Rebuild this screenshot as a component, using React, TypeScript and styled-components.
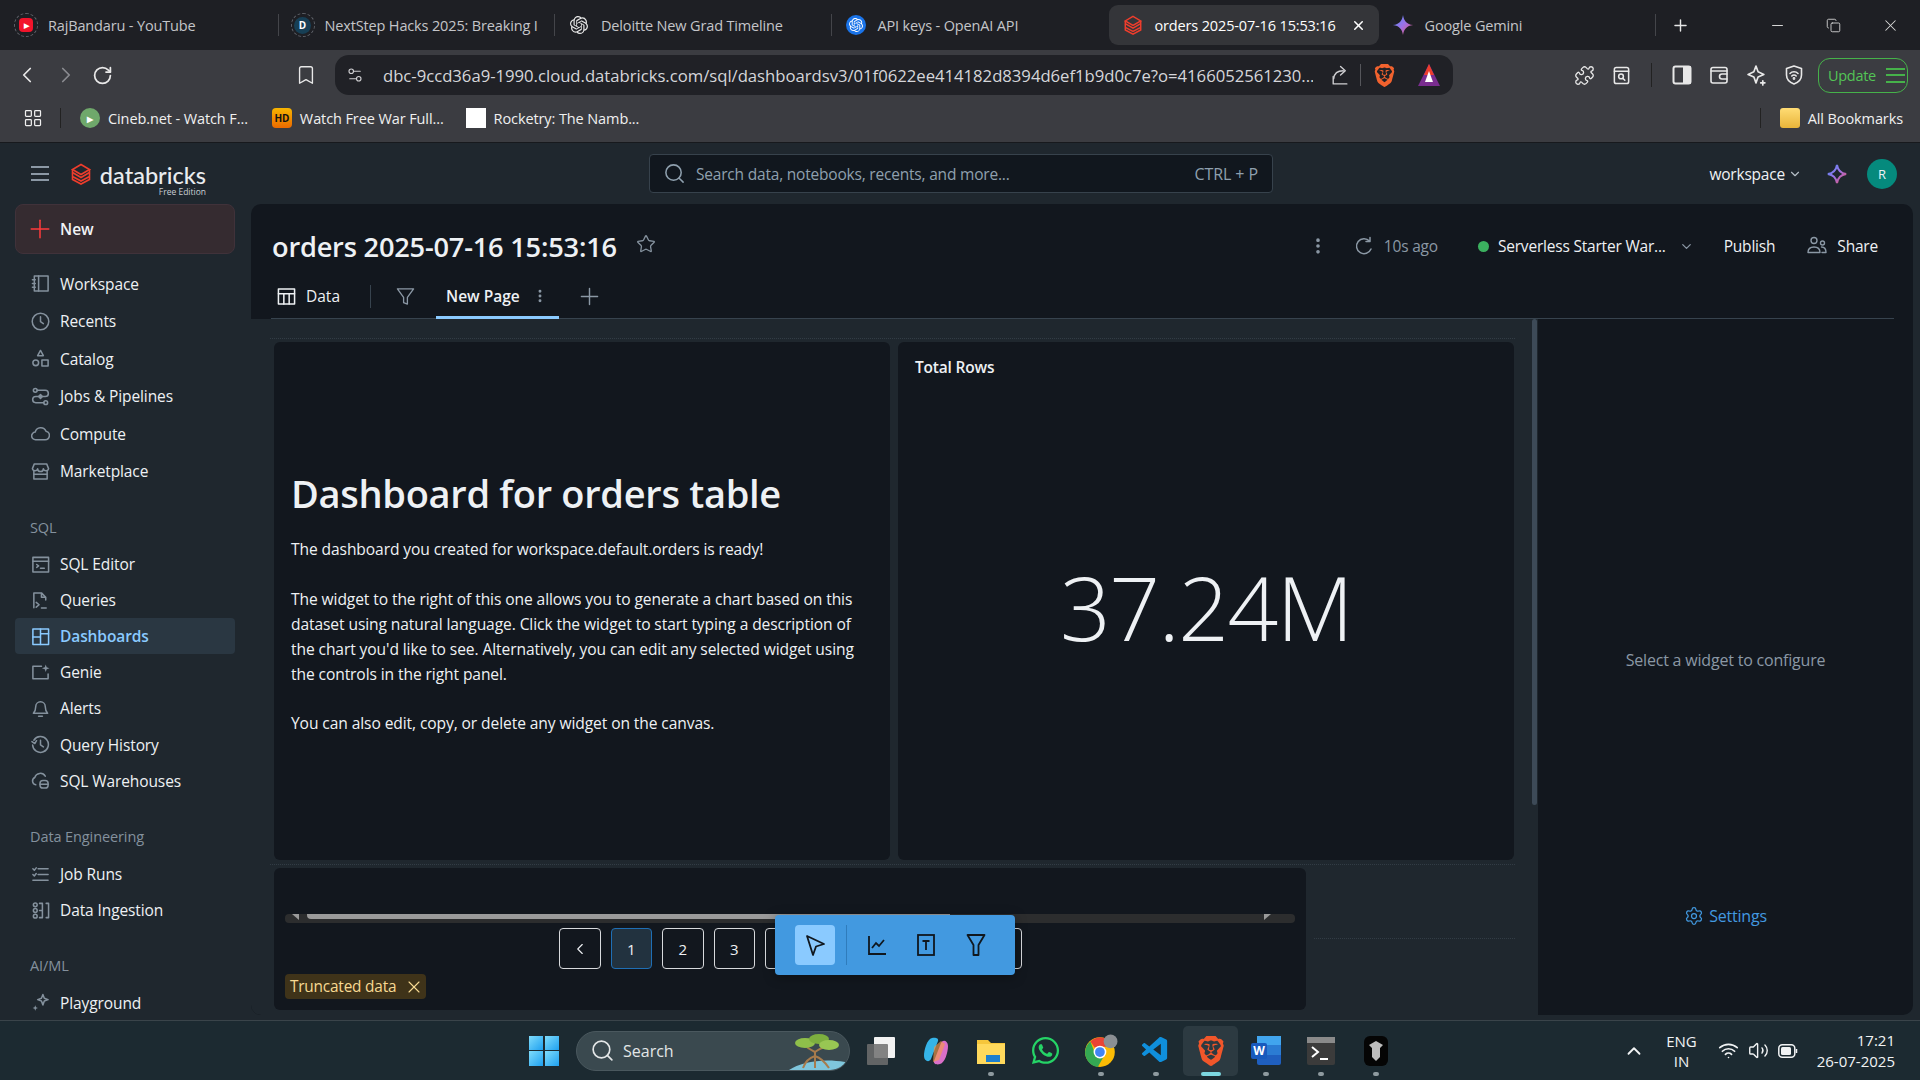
import React from 'react';
import styled, { createGlobalStyle } from 'styled-components';
import {
  Bookmark, ChevronDown, ChevronLeft, ChevronRight, ChevronUp, Copy,
  EllipsisVertical, LayoutGrid, Minus, Plus, Puzzle, RotateCw, Search, Settings,
  Settings2, Star, Volume2, Wifi, X,
} from 'lucide-react';
import { FaWhatsapp } from 'react-icons/fa';
import { SiBrave, SiOpenai } from 'react-icons/si';
import { VscVscode } from 'react-icons/vsc';

const FONT = '"Open Sans", "Noto Sans", sans-serif';

const Global = createGlobalStyle`
  html, body { margin: 0; padding: 0; background: #1f272e; }
  * { box-sizing: border-box; }
  body { font-family: ${FONT}; overflow: hidden; }
`;

const Screen = styled.div`
  width: 1920px;
  height: 1080px;
  display: flex;
  flex-direction: column;
  overflow: hidden;
`;

/* browser chrome */
const TabStrip = styled.div`
  height: 50px;
  background: #1e1f24;
  display: flex;
  align-items: center;
  padding-left: 2px;
  flex: none;
`;

const Tab = styled.div<{ $w?: number; $active?: boolean }>`
  width: ${(p) => p.$w ?? 276.5}px;
  height: 40px;
  display: flex;
  align-items: center;
  gap: 10px;
  padding-left: 12px;
  border-radius: 9px;
  color: ${(p) => (p.$active ? '#fff' : '#c4c5c9')};
  font-size: 14.5px;
  letter-spacing: -0.15px;
  background: ${(p) => (p.$active ? '#343539' : 'transparent')};
  white-space: nowrap;
  overflow: hidden;
  position: relative;
  flex: none;
`;

const TabIcon = styled.span`
  width: 24px;
  height: 24px;
  flex: none;
  display: flex;
  align-items: center;
  justify-content: center;
  color: #e6e6e6;
`;

const TabClose = styled.span`
  margin-left: auto;
  margin-right: 13px;
  display: flex;
`;

const TabDivider = styled.div`
  width: 1px;
  height: 22px;
  background: #44454a;
  margin-left: -1px;
  flex: none;
`;

const NewTab = styled.div`
  margin-left: 15px;
  color: #e6e6e6;
  display: flex;
`;

const WindowControls = styled.div`
  margin-left: auto;
  display: flex;
  align-items: center;
  gap: 40px;
  padding-right: 20px;
  color: #d9d9d9;
`;

const Toolbar = styled.div`
  height: 50px;
  background: #3b3c41;
  display: flex;
  align-items: center;
  padding: 0 12px 0 16px;
  flex: none;
  color: #e8e8e8;
`;

const NavButtons = styled.div`
  display: flex;
  align-items: center;
  gap: 13px;
  width: 279px;
`;

const UrlBar = styled.div`
  width: 1118px;
  height: 40px;
  margin-left: 18px;
  background: #202126;
  border-radius: 14px;
  display: flex;
  align-items: center;
  padding: 0 12px 0 11px;
  color: #cfcfd2;
`;

const UrlText = styled.span`
  margin-left: 19px;
  width: 931px;
  font-size: 16.7px;
  letter-spacing: -0.02px;
  white-space: nowrap;
  overflow: hidden;
  color: #d5d6da;
`;

const VSep = styled.span<{ $h?: number; $c?: string; $mx?: number }>`
  width: 1px;
  height: ${(p) => p.$h ?? 22}px;
  background: ${(p) => p.$c ?? '#55565b'};
  margin: 0 ${(p) => p.$mx ?? 10}px;
  flex: none;
`;

const ExtIcons = styled.div`
  display: flex;
  align-items: center;
  gap: 17px;
  margin-left: 121px;
`;

const UpdateBtn = styled.div`
  width: 90px;
  height: 35px;
  margin-left: 14px;
  border: 1.5px solid #46b24a;
  border-radius: 12px;
  color: #53c556;
  font-size: 14.5px;
  display: flex;
  align-items: center;
  justify-content: space-between;
  padding: 0 2px 0 9px;
  letter-spacing: -0.3px;
`;

const Burger = styled.span<{ $c?: string; $w?: number }>`
  width: ${(p) => p.$w ?? 20}px;
  height: 15px;
  display: block;
  border-top: 2px solid ${(p) => p.$c ?? '#46b24a'};
  border-bottom: 2px solid ${(p) => p.$c ?? '#46b24a'};
  position: relative;
  flex: none;
  &::after {
    content: '';
    position: absolute;
    left: 0;
    right: 0;
    top: 4.5px;
    height: 2px;
    background: ${(p) => p.$c ?? '#46b24a'};
  }
`;

const Bookmarks = styled.div`
  height: 43px;
  background: #3b3c41;
  display: flex;
  align-items: center;
  padding: 0 17px 6px 23px;
  color: #f0f0f0;
  font-size: 14.5px;
  letter-spacing: -0.1px;
  flex: none;
  border-bottom: 1px solid #17191d;
`;

const BookmarkItem = styled.div<{ $ml?: number }>`
  display: flex;
  align-items: center;
  gap: 8px;
  margin-left: ${(p) => p.$ml ?? 0}px;
  white-space: nowrap;
`;

const Favicon = styled.span<{ $bg: string; $r?: number; $c?: string }>`
  width: 20px;
  height: 20px;
  border-radius: ${(p) => p.$r ?? 10}px;
  background: ${(p) => p.$bg};
  color: ${(p) => p.$c ?? '#fff'};
  display: inline-flex;
  align-items: center;
  justify-content: center;
  font-size: 10px;
  font-weight: 700;
  flex: none;
`;

/* databricks shell */
const AppShell = styled.div`
  flex: 1;
  min-height: 0;
  display: flex;
  flex-direction: column;
  background: #1f272e;
`;

const TopBar = styled.div`
  height: 61px;
  flex: none;
  display: flex;
  align-items: center;
  padding-left: 31px;
`;

const LogoBlock = styled.div`
  margin: 9px 0 0 21px;
  display: flex;
  align-items: flex-start;
  gap: 7px;
  width: 138px;
  flex: none;
  svg { margin-top: 2px; flex: none; }
`;

const LogoWords = styled.div`
  display: flex;
  flex-direction: column;
  align-items: flex-end;
  width: 107px;
  flex: none;
`;

const LogoName = styled.span`
  font-family: Lato, sans-serif;
  font-size: 23.5px;
  line-height: 28px;
  font-weight: 500;
  color: #e9ecef;
  letter-spacing: 0;
`;

const LogoSub = styled.span`
  font-size: 8.5px;
  line-height: 6px;
  color: #c9ced4;
`;

const SearchBox = styled.div`
  width: 624px;
  height: 39px;
  margin-left: 441px;
  background: #11171e;
  border: 1px solid #37424c;
  border-radius: 4px;
  display: flex;
  align-items: center;
  padding: 0 14px 0 13px;
  color: #8fa0ae;
  font-size: 15.5px;
  flex: none;
`;

const SearchHint = styled.span`
  margin-left: 10px;
  letter-spacing: -0.2px;
`;

const Shortcut = styled.span`
  margin-left: auto;
  font-size: 16px;
  letter-spacing: -0.1px;
`;

const UserArea = styled.div`
  margin-left: auto;
  padding-right: 23px;
  display: flex;
  align-items: center;
  color: #eef1f4;
  font-size: 15.5px;
  letter-spacing: -0.2px;
`;

const Avatar = styled.span`
  width: 30px;
  height: 30px;
  border-radius: 50%;
  background: #058a7d;
  display: flex;
  align-items: center;
  justify-content: center;
  font-size: 13px;
  margin-left: 20px;
`;

const Body = styled.div`
  flex: 1;
  min-height: 0;
  display: flex;
`;

const Sidebar = styled.nav`
  width: 251px;
  flex: none;
  overflow: hidden;
  padding: 0 16px 0 15px;
`;

const NewButton = styled.div`
  height: 50px;
  border-radius: 8px;
  background: #352b30;
  border: 1px solid #40323a;
  display: flex;
  align-items: center;
  gap: 5px;
  padding-left: 9px;
  font-size: 15.5px;
  font-weight: 600;
  color: #f1f3f5;
  margin-bottom: 11px;
`;

const NavRow = styled.div<{ $h: number; $active?: boolean }>`
  height: ${(p) => p.$h}px;
  border-radius: 4px;
  display: flex;
  align-items: center;
  gap: 10px;
  padding-left: 16px;
  font-size: 15.5px;
  letter-spacing: -0.1px;
  color: ${(p) => (p.$active ? '#8acaff' : '#eef1f4')};
  font-weight: ${(p) => (p.$active ? 600 : 400)};
  background: ${(p) => (p.$active ? '#2a3742' : 'transparent')};
  svg { color: ${(p) => (p.$active ? '#8acaff' : '#84919d')}; flex: none; }
`;

const NavLabel = styled.div<{ $mb?: number; $mt?: number }>`
  height: 20px;
  line-height: 20px;
  margin: ${(p) => p.$mt ?? 27.5}px 0 ${(p) => p.$mb ?? 9}px 15px;
  font-size: 14.5px;
  letter-spacing: -0.1px;
  color: #84919d;
`;

const Main = styled.main`
  flex: 1;
  min-width: 0;
  margin: 0 7px 5px 0;
  background: #12171e;
  border-radius: 10px;
  display: flex;
  flex-direction: column;
  overflow: hidden;
`;

const TitleRow = styled.div`
  height: 76px;
  flex: none;
  display: flex;
  align-items: center;
  padding: 8px 35px 0 21px;
  color: #eef1f4;
`;

const Title = styled.h1`
  margin: 0 19px 0 0;
  font-size: 27.2px;
  font-weight: 600;
  letter-spacing: -0.2px;
  color: #eef1f4;
`;

const Meta = styled.span<{ $muted?: boolean; $ml?: number }>`
  font-size: 15.5px;
  letter-spacing: -0.2px;
  margin-left: ${(p) => p.$ml ?? 0}px;
  color: ${(p) => (p.$muted ? '#8b98a5' : '#eef1f4')};
  white-space: nowrap;
`;

const StatusDot = styled.span`
  width: 11px;
  height: 11px;
  border-radius: 50%;
  background: #3bb05f;
  margin-left: 40px;
  margin-right: 9px;
  flex: none;
`;

const TabsRow = styled.div`
  height: 39px;
  flex: none;
  margin: 0 19px 0 20px;
  border-bottom: 1px solid #37434e;
  display: flex;
  align-items: center;
  color: #eef1f4;
  font-size: 15.5px;
  padding: 0 0 6px 6px;
`;

const DataTab = styled.div`
  display: flex;
  align-items: center;
  gap: 10px;
  color: #eef1f4;
`;

const PageTab = styled.div`
  width: 123px;
  height: 39px;
  align-self: flex-end;
  margin: 0 0 -7px 21px;
  border-bottom: 3px solid #8acaff;
  padding: 0 0 4px 10px;
  display: flex;
  align-items: center;
  gap: 12px;
  font-weight: 600;
  flex: none;
`;

const Workspace = styled.div`
  flex: 1;
  min-height: 0;
  display: flex;
`;

const Canvas = styled.div`
  width: 1287px;
  flex: none;
  background: #1f272e;
  padding: 19px 0 0 23px;
  position: relative;
`;

const CardRow = styled.div<{ $h: number }>`
  height: ${(p) => p.$h}px;
  display: flex;
  gap: 8px;
  margin-left: -4px;
  padding: 3px 0 0 4px;
  width: 1245px;
  border-top: 1px dotted #323c45;
  margin-bottom: 4px;
`;

const Card = styled.section<{ $w: number }>`
  width: ${(p) => p.$w}px;
  background: #12171e;
  border-radius: 6px;
  position: relative;
  flex: none;
`;

const EmptyCell = styled.div`
  flex: 1;
  height: 71px;
  border-bottom: 1px dotted #323c45;
`;

const TextCard = styled(Card)`
  display: flex;
  flex-direction: column;
  justify-content: center;
  padding: 0 18px 0 17px;
  color: #eef1f4;
  font-size: 15.6px;
  line-height: 25px;
  letter-spacing: -0.1px;
`;

const CardHeading = styled.h2`
  margin: 0 0 17.5px;
  font-size: 38px;
  line-height: 54px;
  font-weight: 600;
  letter-spacing: -0.3px;
`;

const CardPara = styled.p`
  margin: 0 0 24.5px;
  &:last-child { margin-bottom: 0; }
`;

const CounterCard = styled(Card)`
  display: flex;
  flex-direction: column;
  padding: 15px 17px;
  color: #eef1f4;
`;

const CounterTitle = styled.div`
  font-size: 15.5px;
  line-height: 20px;
  font-weight: 600;
  letter-spacing: -0.2px;
`;

const CounterValue = styled.div`
  flex: 1;
  display: flex;
  align-items: center;
  justify-content: center;
  padding-bottom: 10px;
  font-weight: 300;
  font-size: 89px;
  letter-spacing: -1.5px;
`;

const TableCard = styled(Card)`
  padding-top: 46px;
`;

const ScrollTrack = styled.div`
  height: 9px;
  margin: 0 11px;
  background: #2c2d2e;
  border-radius: 4px;
  display: flex;
  align-items: flex-start;
  justify-content: space-between;
  padding: 0 24px 0 7px;
`;

const ScrollThumb = styled.div`
  width: 643px;
  height: 5px;
  margin: 0 auto 0 8px;
  background: #9a9a9a;
  border-radius: 0 0 0 4px;
`;

const ScrollArrow = styled.span<{ $flip?: boolean }>`
  width: 0;
  height: 0;
  border-top: 6px solid #9a9a9a;
  ${(p) => (p.$flip ? 'border-right: 7px solid transparent;' : 'border-left: 7px solid transparent;')}
`;

const Pager = styled.div`
  display: flex;
  gap: 10px;
  margin: 5px 0 0 285px;
`;

const PageButton = styled.div<{ $active?: boolean; $w?: number }>`
  width: ${(p) => p.$w ?? 41.5}px;
  height: 41px;
  border-radius: 4px;
  border: 1px solid ${(p) => (p.$active ? '#1f6fb5' : '#d8dadd')};
  background: ${(p) => (p.$active ? '#22323f' : 'transparent')};
  color: #eef1f4;
  font-size: 15px;
  display: flex;
  align-items: center;
  justify-content: center;
`;

const TruncatedTag = styled.div`
  position: absolute;
  left: 11px;
  bottom: 11px;
  width: 141px;
  height: 25px;
  border-radius: 4px;
  background: #3f3319;
  color: #f7d992;
  font-size: 15.4px;
  letter-spacing: -0.2px;
  display: flex;
  align-items: center;
  justify-content: space-between;
  padding: 0 2px 0 5px;
`;

const FloatBar = styled.div`
  position: absolute;
  left: 501px;
  top: 47px;
  width: 240px;
  height: 60px;
  background: #4299e0;
  border-radius: 4px;
  box-shadow: 0 2px 12px rgba(0, 0, 0, 0.35);
  display: flex;
  align-items: center;
  padding-left: 20px;
  color: #10171e;
`;

const FloatTool = styled.span<{ $active?: boolean; $w?: number }>`
  width: ${(p) => p.$w ?? 40}px;
  height: 40px;
  border-radius: 4px;
  background: ${(p) => (p.$active ? '#8acaff' : 'transparent')};
  display: flex;
  align-items: center;
  justify-content: center;
`;

const Rail = styled.div`
  width: 5px;
  flex: none;
  background: #1f272e;
  margin-left: -6px;
  position: relative;
  &::after {
    content: '';
    position: absolute;
    left: 0;
    top: 0;
    width: 5px;
    height: 486px;
    background: #3d4a57;
    border-radius: 3px;
  }
`;

const ConfigPanel = styled.aside`
  flex: 1;
  margin-left: 1px;
  display: flex;
  flex-direction: column;
  align-items: center;
  color: #8b98a5;
  font-size: 16px;
  letter-spacing: -0.2px;
  padding-top: 330px;
`;

const SettingsLink = styled.div`
  margin-top: 234px;
  display: flex;
  align-items: center;
  gap: 5px;
  color: #4299e0;
`;

/* windows taskbar */
const Taskbar = styled.div`
  height: 60px;
  flex: none;
  background: #1c2a31;
  border-top: 1px solid #3a444a;
  display: flex;
  align-items: center;
  padding-left: 529px;
  color: #f1f3f4;
`;

const StartGrid = styled.div`
  width: 30px;
  height: 30px;
  display: grid;
  grid-template-columns: 1fr 1fr;
  gap: 1.5px;
  span { background: linear-gradient(135deg, #7fdcfb, #1ea0f0); }
`;

const SearchPill = styled.div`
  width: 274px;
  height: 40px;
  margin-left: 17px;
  border-radius: 20px;
  background: #3a494f;
  border: 1px solid #4a585e;
  display: flex;
  align-items: center;
  padding-left: 13px;
  gap: 8px;
  font-size: 16px;
  color: #e3e6e7;
  overflow: hidden;
`;

const PillArt = styled.svg`
  margin-left: auto;
  margin-right: 4px;
`;

const TaskIcons = styled.div`
  display: flex;
  margin-left: 3px;
`;

const TaskSlot = styled.div<{ $active?: boolean; $dot?: boolean }>`
  width: 55px;
  height: 50px;
  border-radius: 5px;
  display: flex;
  align-items: center;
  justify-content: center;
  position: relative;
  background: ${(p) => (p.$active ? '#2c3a41' : 'transparent')};
  &::after {
    content: '';
    display: ${(p) => (p.$dot || p.$active ? 'block' : 'none')};
    position: absolute;
    bottom: 0;
    left: 50%;
    transform: translateX(-50%);
    width: ${(p) => (p.$active ? 20 : 6)}px;
    height: 4px;
    border-radius: 3px;
    background: ${(p) => (p.$active ? '#7cd7e0' : '#8e9a9f')};
  }
`;

const Tray = styled.div`
  margin-left: auto;
  padding-right: 25px;
  display: flex;
  align-items: center;
  font-size: 15px;
`;

const TrayLang = styled.div`
  margin-left: 17px;
  width: 40px;
  text-align: center;
  line-height: 20px;
`;

const TrayIcons = styled.div`
  display: flex;
  gap: 9px;
  align-items: center;
  margin-left: 16.5px;
`;

const TrayClock = styled.div`
  margin-left: 11px;
  text-align: right;
  line-height: 21px;
  width: 86px;
  white-space: nowrap;
`;

const Ring = styled.span`
  width: 24px;
  height: 24px;
  border-radius: 50%;
  border: 1.5px dashed #5e6168;
  display: flex;
  align-items: center;
  justify-content: center;
`;

const Stack = ({ size = 22 }: { size?: number }) => (
  <svg width={size} height={size} viewBox="0 0 20 22" fill="none" stroke="#ee3d2c" strokeWidth="1.6">
    <path d="M10 1.5 18.5 6.5 10 11.5 1.5 6.5Z" />
    <path d="M1.5 6.5V9.5L10 14.5 18.5 9.5V6.5" />
    <path d="M1.5 10V13.5L10 18 18.5 13.5V10" />
    <path d="M1.5 14V16.5L10 21 18.5 16.5V14" />
  </svg>
);

const SPARK_PATH = 'M12 1c1 6.5 4 10 11 11-7 1-10 4.5-11 11-1-6.5-4-10-11-11 7-1 10-4.5 11-11Z';

const Spark = ({ id, size, outline }: { id: string; size: number; outline?: boolean }) => (
  <svg width={size} height={size} viewBox="0 0 24 24">
    <defs>
      <linearGradient id={id} x1="0" y1="0" x2="1" y2="1">
        <stop offset="0" stopColor="#4f8df5" />
        <stop offset="0.5" stopColor="#9b72e8" />
        <stop offset="1" stopColor="#ec4f5f" />
      </linearGradient>
    </defs>
    {outline ? (
      <path d={SPARK_PATH} fill="none" stroke={`url(#${id})`} strokeWidth="2.4" />
    ) : (
      <path d={SPARK_PATH} fill={`url(#${id})`} />
    )}
  </svg>
);

type IconProps = { size?: number };
const ic = (children: React.ReactNode, sw = 1.6) => ({ size = 20 }: IconProps) => (
  <svg width={size} height={size} viewBox="0 0 20 20" fill="none" stroke="currentColor" strokeWidth={sw} strokeLinecap="round" strokeLinejoin="round">
    {children}
  </svg>
);

const NotebookIcon = ic(<><rect x="3.5" y="2" width="14.5" height="16" /><path d="M8 2v16M1.5 6h3M1.5 10h3M1.5 14h3" /></>);
const ClockIcon = ic(<><circle cx="10" cy="10" r="8.7" /><path d="M10 5v5.2l3 2" /></>);
const ShapesIcon = ic(<><path d="M10 1.5 13 7H7Z" /><circle cx="5" cy="14.5" r="3" /><rect x="11.5" y="11.5" width="6.5" height="6.5" /></>);
const JobsIcon = ic(<><circle cx="4.5" cy="3.5" r="2" /><circle cx="15.5" cy="16.5" r="2" /><path d="M6.5 3.5H15a2.7 2.7 0 0 1 0 6.5H5a3 3 0 0 0 0 6.5h8.5" /><path d="M8 10l2-2 2 2-2 2Z" /></>);
const CloudIcon = ic(<path d="M5 16.5a4 4 0 0 1-.6-8A6 6 0 0 1 15.8 7.6 4.5 4.5 0 0 1 15 16.5Z" />);
const StoreIcon = ic(<><path d="M3 9v9h14V9" /><path d="M3.5 2h13l2 5a2.8 2.8 0 0 1-5.5 0 3 3 0 0 1-6 0A2.8 2.8 0 0 1 1.5 7Z" /><path d="M3 13h14" /></>);
const TerminalWin = ic(<><rect x="2" y="2.5" width="16.5" height="15.5" /><path d="M2 6.5h16.5M6 10l2 1.5L6 13M10 14h4" /></>);
const QueryIcon = ic(<><path d="M3 17.5V2h8l4.5 4.5v3M11 2v4.5h4.5" /><path d="M5.5 12l3 2.5-3 2.5M11 18h5" /></>);
const BoardIcon = ic(<><rect x="2" y="2" width="16.5" height="16.5" /><path d="M10 2v16.5M2 10.5h8M10 7h8.5" /></>);
const GenieIcon = ic(<><path d="M11 3.5H2v13h16v-5" /><path d="M15.5 1.5l1 3 3 1-3 1-1 3-1-3-3-1 3-1Z" fill="currentColor" stroke="none" /></>);
const BellIcon = ic(<path d="M5 8a5 5 0 0 1 10 0c0 4 1 5.5 2.5 7h-15C4 13.5 5 12 5 8ZM8 18.2h4" />);
const HistoryIcon = ic(<path d="M3 5.5a8.3 8.3 0 1 1-1.3 5M1 7l3 2 1.8-3M10 5.5V10.5l3 2" />);
const WarehouseIcon = ic(<><path d="M5 14.5a4 4 0 0 1-1-7.6 6 6 0 0 1 11-1.4" /><rect x="9.5" y="10" width="8.5" height="8" rx="3" /><path d="M9.5 14h8.5" /></>);
const RunsIcon = ic(<><path d="M7.5 4H18M7.5 10H18M2 16h16M2 4l1.5 1.5L5.5 3M2 10l1.5 1.5L5.5 9" /></>);
const IngestIcon = ic(<><circle cx="4.5" cy="4" r="2" /><circle cx="4.5" cy="10" r="2" /><circle cx="4.5" cy="16" r="2" /><path d="M9 2.5h3v15H9M12 10H9M16 2.5h2.5v15H16" /></>);
const PlayIcon = ic(<><path d="M12.5 1.5l1.5 4 4 1.5-4 1.5-1.5 4-1.5-4-4-1.5 4-1.5Z" /><path d="M4.5 13l.8 2 2 .8-2 .8-.8 2-.8-2-2-.8 2-.8Z" fill="currentColor" stroke="none" /></>);
const ShareOut = ic(<><path d="M4 11v7h13" /><path d="M4.5 13c.5-5 4-7.5 9-7.5M11 1.5l4.5 4-4.5 4" /></>, 1.3);
const ReaderIcon = ic(<><rect x="2.5" y="1.5" width="15" height="17" rx="2" /><path d="M2.5 5.5h15" /><circle cx="9.5" cy="11" r="2.5" /><path d="M11.5 13l2 2" /></>);
const WalletIcon = ic(<><rect x="2" y="2.5" width="16" height="15.5" rx="2" /><path d="M2 6h16M18 9h-5a2 2 0 0 0 0 5h5" /></>);
const SparkOutline = ic(<><path d="M9.5 1l2 5.5L17 9l-5.5 2.5-2 5.5-2-5.5L2 9l5.5-2.5Z" /><path d="M16 15v4M14 17h4" /></>);
const ShieldIcon = ic(<><path d="M10 1l7.5 2.5V10c0 4.5-3.5 7.5-7.5 9-4-1.5-7.5-4.5-7.5-9V3.5Z" /><path d="M6 8.5a5.5 5.5 0 0 1 8 0M7.8 11a3 3 0 0 1 4.4 0" /><circle cx="10" cy="13.5" r=".6" /></>);
const SideIcon = ic(<><rect x="1.5" y="1.5" width="17" height="17" rx="2" /><rect x="12" y="2" width="6" height="16" fill="currentColor" /></>, 2);
const TableIcon = ic(<><rect x="1.5" y="2" width="17" height="16" /><path d="M1.5 7h17M7.2 7v11M12.8 7v11" /></>);
const FunnelIcon = ic(<path d="M1.5 2h17L12 11v7l-4-1.5V11Z" />, 1.4);
const PeopleIcon = ic(<><circle cx="7" cy="4.5" r="3" /><circle cx="15.5" cy="7" r="2" /><path d="M1 16.5c0-4 2.5-5.5 6-5.5s6 1.5 6 5.5ZM14.5 11c3 0 4.5 1.5 4.5 5.5h-4" /></>, 1.4);
const RefreshC = ic(<path d="M15.5 5a7.5 7.5 0 1 0 1.5 8M16 1.5V5.5h-4" />, 1.5);
const BigPlus = ic(<path d="M10 1.5v17M1.5 10h17" />, 1.5);

const mainNav = [
  ['Workspace', NotebookIcon], ['Recents', ClockIcon], ['Catalog', ShapesIcon],
  ['Jobs & Pipelines', JobsIcon], ['Compute', CloudIcon], ['Marketplace', StoreIcon],
] as const;
const sqlNav = [
  ['SQL Editor', TerminalWin], ['Queries', QueryIcon], ['Dashboards', BoardIcon], ['Genie', GenieIcon],
  ['Alerts', BellIcon], ['Query History', HistoryIcon], ['SQL Warehouses', WarehouseIcon],
] as const;
const dataNav = [['Job Runs', RunsIcon], ['Data Ingestion', IngestIcon]] as const;
const aiNav = [['Playground', PlayIcon]] as const;

const navList = (items: readonly (readonly [string, React.ComponentType<IconProps>])[], h: number) =>
  items.map(([label, Icon]) => (
    <NavRow key={label} $h={h} $active={label === 'Dashboards'}>
      <Icon size={19} />
      {label}
    </NavRow>
  ));

export default function App() {
  return (
    <Screen>
      <Global />
      <TabStrip>
        <Tab>
          <TabIcon><Ring><Favicon $bg="#f2142b" $r={4} style={{ width: 14, height: 14, fontSize: 7 }}>▶</Favicon></Ring></TabIcon>
          RajBandaru - YouTube
        </Tab>
        <TabDivider />
        <Tab>
          <TabIcon><Ring><Favicon $bg="#173f55" style={{ width: 17, height: 17 }}>D</Favicon></Ring></TabIcon>
          NextStep Hacks 2025: Breaking I
        </Tab>
        <TabDivider />
        <Tab>
          <TabIcon><SiOpenai size={18} /></TabIcon>
          Deloitte New Grad Timeline
        </Tab>
        <TabDivider />
        <Tab $w={277}>
          <TabIcon><Favicon $bg="#1a73e8"><SiOpenai size={14} /></Favicon></TabIcon>
          API keys - OpenAI API
        </Tab>
        <Tab $w={270} $active>
          <TabIcon><Stack size={20} /></TabIcon>
          orders 2025-07-16 15:53:16
          <TabClose><X size={15} strokeWidth={2.4} /></TabClose>
        </Tab>
        <Tab $w={277}>
          <TabIcon><Spark id="tab-gem" size={22} /></TabIcon>
          Google Gemini
        </Tab>
        <TabDivider />
        <NewTab><Plus size={19} strokeWidth={1.8} /></NewTab>
        <WindowControls>
          <Minus size={17} strokeWidth={1.4} />
          <Copy size={15} strokeWidth={1.4} />
          <X size={19} strokeWidth={1.3} />
        </WindowControls>
      </TabStrip>

      <Toolbar>
        <NavButtons>
          <ChevronLeft size={26} strokeWidth={1.6} style={{ marginLeft: -2 }} />
          <ChevronRight size={26} strokeWidth={1.6} color="#8a8b90" />
          <RotateCw size={21} strokeWidth={2} />
        </NavButtons>
        <Bookmark size={22} strokeWidth={1.5} />
        <UrlBar>
          <Settings2 size={18} strokeWidth={1.5} />
          <UrlText>dbc-9ccd36a9-1990.cloud.databricks.com/sql/dashboardsv3/01f0622ee414182d8394d6ef1b9d0c7e?o=4166052561230...</UrlText>
          <span style={{ marginLeft: 16, display: 'flex' }}><ShareOut size={21} /></span>
          <VSep $mx={10} />
          <SiBrave size={23} color="#f1622e" style={{ marginLeft: 2 }} />
          <svg width="24" height="24" viewBox="0 0 24 24" style={{ marginLeft: 21 }}>
            <path d="M12 1 23 23H1Z" fill="#7a2d8f" />
            <path d="M12 1 17 12H7Z" fill="#ee3d2c" />
            <path d="M12 8 16 19H8Z" fill="#fff" />
          </svg>
        </UrlBar>
        <ExtIcons>
          <Puzzle size={21} strokeWidth={1.5} />
          <ReaderIcon size={19} />
          <VSep $h={24} $c="#222" $mx={3} />
          <SideIcon size={20} />
          <WalletIcon size={20} />
          <SparkOutline size={21} />
          <ShieldIcon size={20} />
        </ExtIcons>
        <UpdateBtn>Update<Burger $w={19} /></UpdateBtn>
      </Toolbar>

      <Bookmarks>
        <LayoutGrid size={20} strokeWidth={1.5} />
        <VSep $h={20} $c="#222" $mx={17} />
        <BookmarkItem $ml={2}>
          <Favicon $bg="#6fa86b" $r={10} style={{ fontSize: 8 }}>▶</Favicon>
          Cineb.net - Watch F...
        </BookmarkItem>
        <BookmarkItem $ml={24}>
          <Favicon $bg="linear-gradient(#f7b500,#ec6a00)" $r={4} $c="#111">HD</Favicon>
          Watch Free War Full...
        </BookmarkItem>
        <BookmarkItem $ml={22}>
          <Favicon $bg="#fff" $r={0} />
          Rocketry: The Namb...
        </BookmarkItem>
        <VSep $h={20} $c="#222" $mx={19} style={{ marginLeft: 'auto' }} />
        <BookmarkItem>
          <Favicon $bg="linear-gradient(#ffdc74,#e8b43a)" $r={3} />
          All Bookmarks
        </BookmarkItem>
      </Bookmarks>

      <AppShell>
        <TopBar>
          <Burger $c="#8b98a5" $w={18} />
          <LogoBlock>
            <Stack />
            <LogoWords>
              <LogoName>databricks</LogoName>
              <LogoSub>Free Edition</LogoSub>
            </LogoWords>
          </LogoBlock>
          <SearchBox>
            <Search size={23} strokeWidth={1.6} />
            <SearchHint>Search data, notebooks, recents, and more...</SearchHint>
            <Shortcut>CTRL + P</Shortcut>
          </SearchBox>
          <UserArea>
            workspace
            <ChevronDown size={14} color="#b5bec6" style={{ marginLeft: 3 }} />
            <span style={{ marginLeft: 25, display: 'flex' }}><Spark id="top-gem" size={20} outline /></span>
            <Avatar>R</Avatar>
          </UserArea>
        </TopBar>
        <Body>
          <Sidebar>
            <NewButton><Plus size={30} color="#ff3b3b" strokeWidth={1.2} />New</NewButton>
            {navList(mainNav, 37.5)}
            <NavLabel $mb={8.5}>SQL</NavLabel>
            {navList(sqlNav, 36.1)}
            <NavLabel $mt={28.5}>Data Engineering</NavLabel>
            {navList(dataNav, 36)}
            <NavLabel>AI/ML</NavLabel>
            {navList(aiNav, 36)}
          </Sidebar>
          <Main>
            <TitleRow>
              <Title>orders 2025-07-16 15:53:16</Title>
              <Star size={20} strokeWidth={1.6} color="#84919d" style={{ marginTop: -4 }} />
              <EllipsisVertical size={20} strokeWidth={2.4} color="#8b98a5" style={{ marginLeft: 'auto', marginRight: 26 }} />
              <span style={{ color: '#8b98a5', display: 'flex' }}><RefreshC size={20} /></span>
              <Meta $muted $ml={10}>10s ago</Meta>
              <StatusDot />
              <Meta>Serverless Starter War...</Meta>
              <ChevronDown size={15} color="#8b98a5" style={{ marginLeft: 13 }} />
              <Meta $ml={30}>Publish</Meta>
              <span style={{ color: '#8b98a5', display: 'flex', marginLeft: 32 }}><PeopleIcon size={20} /></span>
              <Meta $ml={10}>Share</Meta>
            </TitleRow>
            <TabsRow>
              <DataTab><TableIcon size={19} />Data</DataTab>
              <VSep $h={23} $c="#37434e" $mx={30} />
              <span style={{ color: '#8b98a5', display: 'flex', marginLeft: -5 }}><FunnelIcon size={19} /></span>
              <PageTab>New Page<EllipsisVertical size={16} strokeWidth={2.4} color="#8b98a5" /></PageTab>
              <span style={{ color: '#8b98a5', display: 'flex', marginLeft: 21 }}><BigPlus size={19} /></span>
            </TabsRow>
            <Workspace>
              <Canvas>
                <CardRow $h={522}>
                  <TextCard $w={616}>
                    <CardHeading>Dashboard for orders table</CardHeading>
                    <CardPara>The dashboard you created for workspace.default.orders is ready!</CardPara>
                    <CardPara>
                      The widget to the right of this one allows you to generate a chart based on this dataset using
                      natural language. Click the widget to start typing a description of the chart you'd like to see.
                      Alternatively, you can edit any selected widget using the controls in the right panel.
                    </CardPara>
                    <CardPara>You can also edit, copy, or delete any widget on the canvas.</CardPara>
                  </TextCard>
                  <CounterCard $w={616}>
                    <CounterTitle>Total Rows</CounterTitle>
                    <CounterValue>37.24M</CounterValue>
                  </CounterCard>
                </CardRow>
                <CardRow $h={146}>
                  <TableCard $w={1032}>
                    <ScrollTrack>
                      <ScrollArrow />
                      <ScrollThumb />
                      <ScrollArrow $flip />
                    </ScrollTrack>
                    <Pager>
                      <PageButton><ChevronLeft size={18} strokeWidth={1.5} /></PageButton>
                      <PageButton $active>1</PageButton>
                      <PageButton>2</PageButton>
                      <PageButton>3</PageButton>
                      <PageButton>4</PageButton>
                      <PageButton>5</PageButton>
                      <PageButton>6</PageButton>
                      <PageButton $w={51}>7</PageButton>
                      <PageButton><ChevronRight size={18} strokeWidth={1.5} /></PageButton>
                    </Pager>
                    <TruncatedTag>Truncated data<X size={20} strokeWidth={1.3} /></TruncatedTag>
                    <FloatBar>
                      <FloatTool $active>
                        <svg width="22" height="24" viewBox="0 0 22 24" fill="none" stroke="currentColor" strokeWidth="1.8" strokeLinejoin="round"><path d="M3 3 20 11 12 13.5 9 22Z" /></svg>
                      </FloatTool>
                      <VSep $h={40} $c="#2f7cbc" $mx={10.5} />
                      <FloatTool $w={40}>
                        <svg width="20" height="22" viewBox="0 0 20 22" fill="none" stroke="currentColor" strokeWidth="1.8"><path d="M2 2v18h17M5 14l4-5 3 3 5-6" /></svg>
                      </FloatTool>
                      <FloatTool $w={58}>
                        <svg width="20" height="24" viewBox="0 0 20 24" fill="none" stroke="currentColor" strokeWidth="1.8"><rect x="2" y="2" width="16" height="20" /><path d="M6.5 8h7M10 8v9" /></svg>
                      </FloatTool>
                      <FloatTool $w={42}>
                        <svg width="20" height="24" viewBox="0 0 20 24" fill="none" stroke="currentColor" strokeWidth="1.8" strokeLinejoin="round"><path d="M1.5 2h17L12.5 12v10h-5V12Z" /></svg>
                      </FloatTool>
                    </FloatBar>
                  </TableCard>
                  <EmptyCell />
                </CardRow>
              </Canvas>
              <Rail />
              <ConfigPanel>
                Select a widget to configure
                <SettingsLink><Settings size={20} strokeWidth={1.5} />Settings</SettingsLink>
              </ConfigPanel>
            </Workspace>
          </Main>
        </Body>
      </AppShell>

      <Taskbar>
        <StartGrid><span /><span /><span /><span /></StartGrid>
        <SearchPill>
          <Search size={25} strokeWidth={1.6} />
          Search
          <PillArt width="56" height="38" viewBox="0 0 56 38">
            <path d="M0 38C12 30 34 26 56 30V38Z" fill="#7fc6dc" />
            <path d="M26 36V20M26 24C20 26 16 30 14 36M26 24C32 26 36 30 40 36M26 20C22 18 18 16 16 13M26 20C30 17 34 15 38 15" stroke="#a77b4c" strokeWidth="2" fill="none" />
            <ellipse cx="16" cy="11" rx="10" ry="5" fill="#8fbf4a" />
            <ellipse cx="30" cy="7" rx="10" ry="5" fill="#7daf3f" />
            <ellipse cx="40" cy="13" rx="10" ry="5" fill="#98c653" />
          </PillArt>
        </SearchPill>
        <TaskIcons>
          <TaskSlot>
            <svg width="30" height="30" viewBox="0 0 30 30"><rect x="8" y="1" width="21" height="21" rx="1" fill="#f2f2f2" /><rect x="1" y="8" width="21" height="21" rx="1" fill="#6f6f6f" opacity="0.85" /></svg>
          </TaskSlot>
          <TaskSlot>
            <svg width="30" height="30" viewBox="0 0 30 30"><path d="M11 2C6 3 3 14 3 20c0 5 5 7 7 3l7-18c1-3-3-4-6-3Z" fill="#35b4e8" /><path d="M19 28c5-1 8-12 8-18 0-5-5-7-7-3l-7 18c-1 3 3 4 6 3Z" fill="#d96fc8" /><path d="M13 11l7-6 4 3-6 16-6 2Z" fill="#f59a4a" opacity="0.65" /></svg>
          </TaskSlot>
          <TaskSlot $dot>
            <svg width="30" height="30" viewBox="0 0 30 30"><path d="M1 4h11l3 3h14v21H1Z" fill="#f6c63b" /><rect x="1" y="8" width="28" height="20" fill="#ffd95c" /><rect x="10" y="19" width="14" height="7" fill="#1d7fcf" /></svg>
          </TaskSlot>
          <TaskSlot><FaWhatsapp size={31} color="#25d366" /></TaskSlot>
          <TaskSlot $dot>
            <svg width="34" height="34" viewBox="0 0 32 32"><circle cx="15" cy="17" r="14" fill="#fbbc05" /><path d="M15 3a14 14 0 0 1 13 9H15a5 5 0 0 0-4 2L6 7a14 14 0 0 1 9-4Z" fill="#ea4335" /><path d="M1 17a14 14 0 0 0 12 14l5-9-7-2-5-13a14 14 0 0 0-5 10Z" fill="#34a853" /><circle cx="15" cy="17" r="6" fill="#fff" /><circle cx="15" cy="17" r="4.6" fill="#4285f4" /><circle cx="25" cy="7" r="6.5" fill="#8b8f93" /></svg>
          </TaskSlot>
          <TaskSlot $dot><VscVscode size={31} color="#0f8fdc" /></TaskSlot>
          <TaskSlot $active><SiBrave size={30} color="#f1562a" /></TaskSlot>
          <TaskSlot $dot>
            <svg width="31" height="31" viewBox="0 0 31 31"><rect x="7" y="1" width="24" height="29" rx="2" fill="#1f5fbf" /><rect x="7" y="1" width="24" height="9" fill="#41a5ee" /><rect x="7" y="10" width="24" height="10" fill="#2b7cd3" /><rect x="1" y="8" width="16" height="16" rx="2" fill="#185abd" /><text x="9" y="20" textAnchor="middle" fontSize="12" fontWeight="700" fill="#fff" fontFamily="Open Sans">W</text></svg>
          </TaskSlot>
          <TaskSlot $dot>
            <svg width="30" height="30" viewBox="0 0 30 30"><rect x="1" y="1" width="28" height="28" rx="2" fill="#3b3b3b" /><rect x="1" y="1" width="28" height="6" fill="#8a8a8a" /><path d="M6 11l6 5-6 5M14 23h8" stroke="#fff" strokeWidth="2" fill="none" /></svg>
          </TaskSlot>
          <TaskSlot $dot>
            <svg width="26" height="30" viewBox="0 0 26 30"><rect x="1" y="0" width="24" height="30" rx="6" fill="#050505" /><path d="M6 9l7-4 7 4-3 3v9l-4 4-4-4v-9Z" fill="#bdbdbd" /></svg>
          </TaskSlot>
        </TaskIcons>
        <Tray>
          <ChevronUp size={22} strokeWidth={2} />
          <TrayLang>ENG<br />IN</TrayLang>
          <TrayIcons>
            <Wifi size={21} strokeWidth={1.9} />
            <Volume2 size={21} strokeWidth={1.6} />
            <svg width="20" height="14" viewBox="0 0 20 14" fill="none"><rect x="0.8" y="0.8" width="16" height="12.4" rx="3.5" stroke="#f1f3f4" strokeWidth="1.5" /><rect x="3" y="3" width="10" height="8" rx="1.5" fill="#f1f3f4" /><path d="M18.5 5v4" stroke="#f1f3f4" strokeWidth="1.5" /></svg>
          </TrayIcons>
          <TrayClock>17:21<br />26-07-2025</TrayClock>
        </Tray>
      </Taskbar>
    </Screen>
  );
}
